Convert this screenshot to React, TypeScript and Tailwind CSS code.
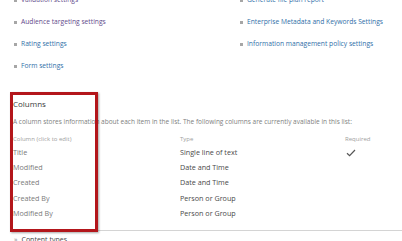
import React from "react";

const leftLinks = [
  { label: "Validation settings", visited: true },
  { label: "Audience targeting settings", visited: true },
  { label: "Rating settings", visited: false },
  { label: "Form settings", visited: false },
];

const rightLinks = [
  "Generate file plan report",
  "Enterprise Metadata and Keywords Settings",
  "Information management policy settings",
];

const columns = [
  { name: "Title", type: "Single line of text", required: true },
  { name: "Modified", type: "Date and Time", required: false },
  { name: "Created", type: "Date and Time", required: false },
  { name: "Created By", type: "Person or Group", required: false },
  { name: "Modified By", type: "Person or Group", required: false },
];

function Bullet() {
  return <span className="w-[3px] h-[3px] bg-[#a6a6a6] shrink-0" />;
}

function SettingLink({ label, visited }: { label: string; visited?: boolean }) {
  return (
    <div className="flex items-center gap-[4px] h-[22px]">
      <Bullet />
      <span className={visited ? "text-[#5f4b8b]" : "text-[#2f6fa8]"}>{label}</span>
    </div>
  );
}

function Check() {
  return (
    <svg width="10" height="8" viewBox="0 0 10 8" className="ml-[1px]">
      <path d="M1 4.2 L3.6 6.6 L9 1" fill="none" stroke="#555" strokeWidth="1.2" />
    </svg>
  );
}

export default function App() {
  return (
    <div
      className="relative w-[402px] h-[241px] overflow-hidden bg-white"
      style={{ fontFamily: "'Open Sans', 'Noto Sans', sans-serif" }}
    >
      <div className="flex -mt-[11px] text-[6.7px]">
        <div className="w-[240px] pl-[14px] flex flex-col">
          {leftLinks.map((l) => (
            <SettingLink key={l.label} label={l.label} visited={l.visited} />
          ))}
        </div>
        <div className="flex flex-col">
          {rightLinks.map((l) => (
            <SettingLink key={l} label={l} />
          ))}
        </div>
      </div>

      <div className="pl-[13px] pt-[21px]">
        <h2 className="text-[8px] leading-[12px] text-[#3a3a3a]">Columns</h2>
        <p className="text-[6.5px] leading-[10px] mt-[7px] text-[#808080] whitespace-nowrap">
          A column stores information about each item in the list. The following columns are currently
          available in this list:
        </p>

        <div className="grid grid-cols-[167px_165px_1fr] mt-[6px]">
          <div className="text-[6px] leading-[12px] text-[#a0a0a0]">Column (click to edit)</div>
          <div className="text-[6px] leading-[12px] text-[#a0a0a0]">Type</div>
          <div className="text-[6px] leading-[12px] text-[#a0a0a0]">Required</div>
          {columns.map((c) => (
            <React.Fragment key={c.name}>
              <div className="text-[7.2px] leading-[15.2px] text-[#7a7a7a]">{c.name}</div>
              <div className="text-[7.2px] leading-[15.2px] text-[#4a4a4a]">{c.type}</div>
              <div className="h-[15.2px] flex items-center">{c.required && <Check />}</div>
            </React.Fragment>
          ))}
        </div>

        <div className="h-[1px] bg-[#d4d4d4] mt-[9px]" />
        <div className="flex items-center gap-[4px] pl-[1px] pt-[3px] text-[7px] leading-[12px] text-[#444]">
          <span className="text-[#888]">»</span>
          <span>Content types</span>
        </div>
      </div>

      <div className="absolute left-[10px] top-[92px] w-[88px] h-[140px] border-[3px] border-[#b3161b] shadow-[1px_1px_2px_rgba(0,0,0,0.35)]" />
    </div>
  );
}
